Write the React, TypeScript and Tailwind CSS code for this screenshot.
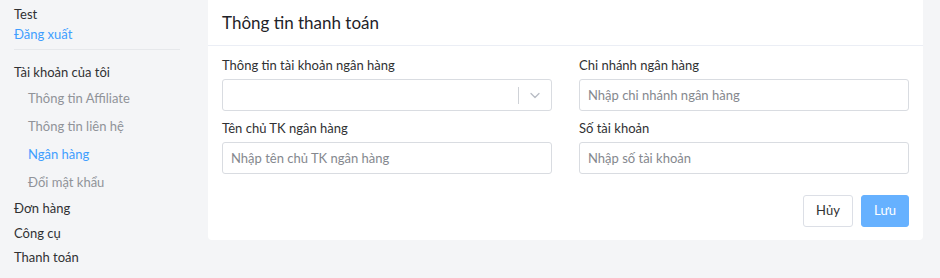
import React from "react";

function Field({ label, placeholder }: { label: string; placeholder: string }) {
  return (
    <div className="flex flex-col">
      <label className="text-[13px] leading-[20px] text-[#303133] mb-[4px]">{label}</label>
      <input
        placeholder={placeholder}
        className="h-[32px] w-full rounded-[3px] border border-[#d9dce1] bg-white px-[8px] text-[13px] text-[#303133] placeholder:text-[#85888e] outline-none"
      />
    </div>
  );
}

export default function App() {
  return (
    <div
      className="flex min-h-[278px] w-[940px] bg-[#f4f5f7] text-[#303133]"
      style={{ fontFamily: 'Lato, "Noto Sans", sans-serif' }}
    >
      <aside className="w-[208px] shrink-0 pl-[14px] pr-[28px] text-[13px]">
        <div className="pt-[4px] leading-[20px]">Test</div>
        <div className="leading-[20px] text-[#409eff]">Đăng xuất</div>
        <div className="mt-[5px] border-t border-[#e6e8eb]" />
        <div className="mt-[12px] leading-[20px]">Tài khoản của tôi</div>
        <div className="mt-[6px] flex flex-col gap-[8px] pl-[14px] text-[#909399]">
          <div className="leading-[20px]">Thông tin Affiliate</div>
          <div className="leading-[20px]">Thông tin liên hệ</div>
          <div className="leading-[20px] text-[#409eff]">Ngân hàng</div>
          <div className="leading-[20px]">Đổi mật khẩu</div>
        </div>
        <div className="mt-[6px] flex flex-col gap-[4.5px]">
          <div className="leading-[20px]">Đơn hàng</div>
          <div className="leading-[20px]">Công cụ</div>
          <div className="leading-[20px]">Thanh toán</div>
        </div>
      </aside>
      <div className="w-[715px] shrink-0 self-start">
        <div className="rounded-b-[4px] bg-white">
          <div className="flex h-[46px] items-center border-b border-[#ebeef5] px-[14px] text-[17px] text-[#1f2329]">
            Thông tin thanh toán
          </div>
          <div className="px-[14px] pt-[9px] pb-[13px]">
            <div className="grid grid-cols-2 gap-x-[27px] gap-y-[7px]">
              <div className="flex flex-col">
                <label className="text-[13px] leading-[20px] text-[#303133] mb-[4px]">Thông tin tài khoản ngân hàng</label>
                <div className="flex h-[32px] items-center rounded-[3px] border border-[#d9dce1] bg-white">
                  <div className="flex-1" />
                  <div className="h-[17px] w-px bg-[#cfd2d7]" />
                  <div className="flex w-[32px] items-center justify-center">
                    <svg width="12" height="12" viewBox="0 0 12 12" fill="none">
                      <path d="M2 4.5 L6 8.5 L10 4.5" stroke="#b8bcc4" strokeWidth="1.3" strokeLinecap="round" strokeLinejoin="round" />
                    </svg>
                  </div>
                </div>
              </div>
              <Field label="Chi nhánh ngân hàng" placeholder="Nhập chi nhánh ngân hàng" />
              <Field label="Tên chủ TK ngân hàng" placeholder="Nhập tên chủ TK ngân hàng" />
              <Field label="Số tài khoản" placeholder="Nhập số tài khoản" />
            </div>
            <div className="mt-[21px] flex justify-end gap-[8px]">
              <button className="h-[32px] w-[50px] rounded-[3px] border border-[#dcdfe6] bg-white text-[13px] text-[#303133]">
                Hủy
              </button>
              <button className="h-[32px] w-[48px] rounded-[3px] border border-[#66b1ff] bg-[#66b1ff] text-[13px] text-white">
                Lưu
              </button>
            </div>
          </div>
        </div>
      </div>
    </div>
  );
}
